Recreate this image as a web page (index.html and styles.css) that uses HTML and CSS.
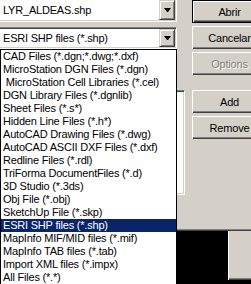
FILE: index.html
```html
<!DOCTYPE html>
<html lang="es">
<head>
    <meta charset="UTF-8">
    <meta name="viewport" content="width=device-width, initial-scale=1.0">
    <title>Abrir capa</title>
    <link rel="stylesheet" href="styles.css">
</head>
<body>
    <div class="dialog">
        <div class="left">
            <div class="combo combo-name">
                <span class="combo-text">LYR_ALDEAS.shp</span>
                <span class="arrow-btn"><span class="arrow"></span></span>
            </div>
            <div class="combo combo-type">
                <span class="combo-text">ESRI SHP files (*.shp)</span>
                <span class="arrow-btn"><span class="arrow"></span></span>
            </div>
            <div class="listbox"></div>
        </div>
        <div class="buttons">
            <button class="btn btn-default">Abrir</button>
            <button class="btn">Cancelar</button>
            <button class="btn" disabled>Options</button>
            <button class="btn btn-add">Add</button>
            <button class="btn">Remove</button>
        </div>
    </div>
    <div class="below">
        <div class="stub"></div>
    </div>

    <!-- open dropdown of the file type combo -->
    <ul class="dropdown">
        <li>CAD Files (*.dgn;*.dwg;*.dxf)</li>
        <li>MicroStation DGN Files (*.dgn)</li>
        <li> MicroStation Cell Libraries (*.cel)</li>
        <li>DGN Library Files (*.dgnlib)</li>
        <li>Sheet Files (*.s*)</li>
        <li>Hidden Line Files (*.h*)</li>
        <li>AutoCAD Drawing Files (*.dwg)</li>
        <li>AutoCAD ASCII DXF Files (*.dxf)</li>
        <li>Redline Files (*.rdl)</li>
        <li>TriForma DocumentFiles (*.d)</li>
        <li>3D Studio (*.3ds)</li>
        <li>Obj File (*.obj)</li>
        <li>SketchUp File (*.skp)</li>
        <li class="selected">ESRI SHP files (*.shp)</li>
        <li>MapInfo MIF/MID files (*.mif)</li>
        <li>MapInfo TAB files (*.tab)</li>
        <li>Import XML files (*.impx)</li>
        <li>All Files (*.*)</li>
    </ul>
</body>
</html>
```

FILE: styles.css
```css
body {
    margin: 0;
    background-color: #000;
    font-family: "Liberation Sans", Arial, sans-serif;
    font-size: 11px;
    letter-spacing: -0.2px;
    color: #000;
    overflow: hidden;
}

.dialog {
    display: flex;
    gap: 15px;
    height: 231px;
    box-sizing: border-box;
    background-color: #d4d0c8;
    border-bottom: 1px solid #404040;
    box-shadow: inset 0 -1px #808080;
}

.left {
    display: flex;
    flex-direction: column;
    align-items: flex-start;
    width: 177px;
    flex: none;
}

/* combos are cut at the left edge, so no left border shows */
.combo {
    display: flex;
    align-items: center;
    width: 177px;
    height: 22px;
    box-sizing: border-box;
    background-color: white;
    border-top: 1px solid #808080;
    border-right: 1px solid #fff;
    border-bottom: 1px solid #fff;
    box-shadow: inset 0 1px #404040, inset -1px -1px #d4d0c8;
    padding: 1px 1px 1px 0;
}

.combo-name {
    border-top: none;
    box-shadow: inset -1px -1px #d4d0c8;
    padding-top: 0;
}

.combo-type {
    margin-top: 5px;
}

.combo-text {
    flex: 1;
    padding-left: 3px;
    white-space: nowrap;
}

.arrow-btn {
    display: flex;
    align-items: center;
    justify-content: center;
    width: 16px;
    height: 100%;
    box-sizing: border-box;
    background-color: #d4d0c8;
    border: 1px solid;
    border-color: #d4d0c8 #404040 #404040 #d4d0c8;
    box-shadow: inset 1px 1px #fff, inset -1px -1px #808080;
}

.arrow {
    width: 1px;
    height: 0;
    border-top: 4px solid #000;
    border-left: 3px solid transparent;
    border-right: 3px solid transparent;
}

.listbox {
    width: 185px;
    height: 105px;
    margin-top: 41px;
    box-sizing: border-box;
    background-color: white;
    border: 1px solid;
    border-color: #808080 #fff #fff #808080;
    box-shadow: inset 1px 1px #404040, inset -1px -1px #d4d0c8;
}

.buttons {
    display: flex;
    flex-direction: column;
    align-items: flex-start;
    gap: 3px;
    flex: 1;
    overflow: hidden;
}

.btn {
    width: 75px;
    height: 23px;
    flex: none;
    padding: 0;
    font-family: inherit;
    font-size: 11px;
    letter-spacing: -0.2px;
    color: #000;
    background-color: #d4d0c8;
    border: none;
    box-shadow: inset 1px 1px #fff, inset -1px -1px #404040, inset -2px -2px #808080;
}

.btn-default {
    border: 1px solid #000;
}

.btn:disabled {
    color: #808080;
    text-shadow: 1px 1px #fff;
}

.btn-add {
    margin-top: 12px;
}

.below {
    display: flex;
    height: 53px;
}

.stub {
    flex: 1;
    height: 49px;
    margin-left: 228px;
    background-color: #d4d0c8;
    box-shadow: inset 1px 0 #fff, inset 0 -1px #404040, inset 0 -2px #808080;
}

.dropdown {
    position: absolute;
    left: 0;
    top: 49px;
    width: 177px;
    height: 235px;
    margin: 0;
    padding: 0;
    overflow: hidden;
    list-style: none;
    box-sizing: border-box;
    background-color: white;
    border: 1px solid #000;
    border-bottom: none;
}

.dropdown li {
    height: 13px;
    line-height: 13px;
    padding-left: 2px;
    white-space: pre;
}

.dropdown .selected {
    background-color: #0a246a;
    color: white;
}
```
